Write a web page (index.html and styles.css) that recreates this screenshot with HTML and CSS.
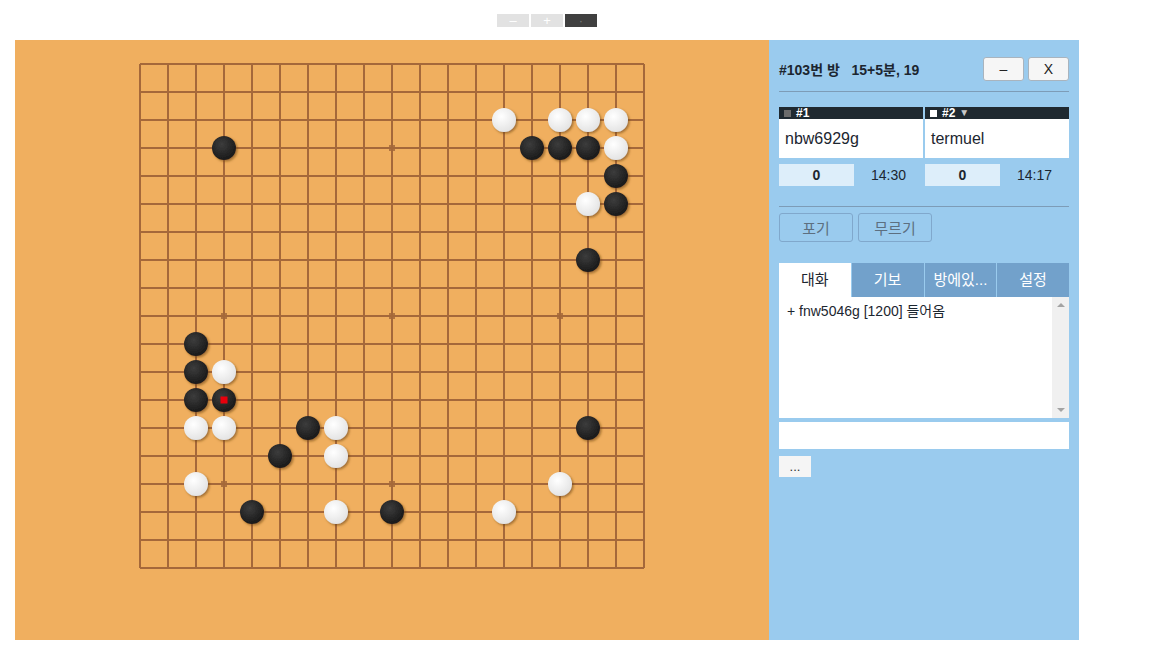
FILE: index.html
```html
<!DOCTYPE html>
<html lang="ko">
<head>
  <meta charset="UTF-8" />
  <title>오목 #103</title>
  <link rel="stylesheet" href="styles.css">
</head>
<body>
  <div class="wrap">
    <div class="zoom-bar">
      <button class="zoom-btn">–</button>
      <button class="zoom-btn">+</button>
      <button class="zoom-btn dark">·</button>
    </div>

    <div class="main">
      <div class="board">
        <svg id="board-svg" width="754" height="600" viewBox="0 0 754 600">
          <defs>
            <radialGradient id="g-black" cx="40%" cy="35%" r="65%">
              <stop offset="0" stop-color="#3c3c3c"/>
              <stop offset="1" stop-color="#1a1a1a"/>
            </radialGradient>
            <radialGradient id="g-white" cx="40%" cy="35%" r="65%">
              <stop offset="0" stop-color="#ffffff"/>
              <stop offset="1" stop-color="#e4e4e4"/>
            </radialGradient>
            <filter id="shadow" x="-30%" y="-30%" width="160%" height="160%">
              <feDropShadow dx="1.5" dy="1.5" stdDeviation="1" flood-color="#6b4010" flood-opacity="0.6"/>
            </filter>
          </defs>
          <g id="grid"></g>
          <g id="stones"></g>
        </svg>
      </div>

      <div class="panel">
        <div class="room-head">
          <div class="room-title">#103번 방 &nbsp;&nbsp;15+5분, 19</div>
          <div class="win-buttons">
            <button class="win-btn">–</button>
            <button class="win-btn">X</button>
          </div>
        </div>
        <hr class="sep">

        <div class="players">
          <div class="player">
            <div class="player-bar"><span class="mark gray"></span>#1</div>
            <div class="player-name">nbw6929g</div>
          </div>
          <div class="player">
            <div class="player-bar"><span class="mark white"></span>#2 <span class="tri">▼</span></div>
            <div class="player-name">termuel</div>
          </div>
        </div>

        <div class="scores">
          <div class="score-cell">
            <div class="score">0</div>
            <div class="clock">14:30</div>
          </div>
          <div class="score-cell">
            <div class="score">0</div>
            <div class="clock">14:17</div>
          </div>
        </div>
        <hr class="sep">

        <div class="actions">
          <button class="action-btn">포기</button>
          <button class="action-btn">무르기</button>
        </div>

        <div class="tabs">
          <div class="tab active">대화</div>
          <div class="tab">기보</div>
          <div class="tab">방에있...</div>
          <div class="tab">설정</div>
        </div>
        <div class="chat">
          <div class="chat-log">+ fnw5046g [1200] 들어옴</div>
          <div class="scrollbar">
            <span class="arrow up"></span>
            <span class="arrow down"></span>
          </div>
        </div>
        <input class="chat-input" type="text">
        <button class="more-btn">...</button>
      </div>
    </div>
  </div>

  <script>
    const NS = 'http://www.w3.org/2000/svg';
    const OX = 125, OY = 24, STEP = 28, N = 19;
    const grid = document.getElementById('grid');
    const stonesLayer = document.getElementById('stones');

    function el(name, attrs, parent) {
      const e = document.createElementNS(NS, name);
      for (const k in attrs) e.setAttribute(k, attrs[k]);
      parent.appendChild(e);
      return e;
    }

    // grid lines
    for (let i = 0; i < N; i++) {
      const p = OX + i * STEP;
      const q = OY + i * STEP;
      el('line', { x1: p, y1: OY, x2: p, y2: OY + 18 * STEP, class: 'ln' }, grid);
      el('line', { x1: OX, y1: q, x2: OX + 18 * STEP, y2: q, class: 'ln' }, grid);
    }

    // star points
    for (const r of [3, 9, 15]) {
      for (const c of [3, 9, 15]) {
        el('rect', { x: OX + c * STEP - 3, y: OY + r * STEP - 3, width: 6, height: 6, class: 'star' }, grid);
      }
    }

    // [col, row, color]
    const moves = [
      [13, 2, 'w'], [15, 2, 'w'], [16, 2, 'w'], [17, 2, 'w'],
      [3, 3, 'b'], [14, 3, 'b'], [15, 3, 'b'], [16, 3, 'b'], [17, 3, 'w'],
      [17, 4, 'b'],
      [16, 5, 'w'], [17, 5, 'b'],
      [16, 7, 'b'],
      [2, 10, 'b'],
      [2, 11, 'b'], [3, 11, 'w'],
      [2, 12, 'b'], [3, 12, 'b'],
      [2, 13, 'w'], [3, 13, 'w'], [6, 13, 'b'], [7, 13, 'w'], [16, 13, 'b'],
      [5, 14, 'b'], [7, 14, 'w'],
      [2, 15, 'w'], [15, 15, 'w'],
      [4, 16, 'b'], [7, 16, 'w'], [9, 16, 'b'], [13, 16, 'w'],
    ];
    const last = [3, 12];

    for (const [c, r, color] of moves) {
      el('circle', {
        cx: OX + c * STEP, cy: OY + r * STEP, r: 12,
        fill: color === 'b' ? 'url(#g-black)' : 'url(#g-white)',
        filter: 'url(#shadow)'
      }, stonesLayer);
    }
    el('rect', { x: OX + last[0] * STEP - 3.5, y: OY + last[1] * STEP - 3.5, width: 7, height: 7, class: 'last' }, stonesLayer);
  </script>
</body>
</html>
```

FILE: styles.css
```css
body {
  margin: 0;
  background: #fff;
  font-family: "Liberation Sans", Arial, "Noto Sans CJK KR", sans-serif;
  color: #1c2630;
}

.wrap {
  width: 1064px;
  margin-left: 15px;
}

.zoom-bar {
  height: 40px;
  display: flex;
  justify-content: center;
  align-items: flex-start;
  gap: 2px;
  padding-top: 14px;
  box-sizing: border-box;
}

.zoom-btn {
  width: 32px;
  height: 13px;
  padding: 0;
  border: none;
  background: #e2e2e2;
  color: #fff;
  font-size: 13px;
  line-height: 13px;
  font-family: inherit;
}

.zoom-btn.dark {
  background: #404040;
  color: #777;
}

.main {
  display: flex;
  height: 600px;
}

.board {
  width: 754px;
  height: 600px;
  background: #f0af5f;
}

.board svg {
  display: block;
}

.ln {
  stroke: #a5683a;
  stroke-width: 2;
}

.star {
  fill: #a5683a;
  opacity: 0.85;
}

.last {
  fill: #e8000c;
}

.panel {
  width: 310px;
  background: #9acbee;
  padding: 0 10px;
  box-sizing: border-box;
}

.room-head {
  display: flex;
  justify-content: space-between;
  align-items: center;
  height: 51px;
  padding-top: 6px;
  box-sizing: border-box;
}

.room-title {
  font-weight: bold;
  font-size: 14px;
}

.win-buttons {
  display: flex;
  gap: 4px;
}

.win-btn {
  width: 41px;
  height: 24px;
  padding: 0;
  border: 1px solid #a9b4be;
  border-radius: 3px;
  background: #f6f6f6;
  font-family: inherit;
  font-size: 14px;
  color: #222;
}

.sep {
  margin: 0;
  border: none;
  border-top: 1px solid #7d9cb7;
  height: 0;
}

.players {
  display: flex;
  gap: 2px;
  margin-top: 15px;
}

.player {
  flex: 1;
}

.player-bar {
  height: 12px;
  background: #1f2930;
  color: #fff;
  font-weight: bold;
  font-size: 12px;
  line-height: 12px;
  display: flex;
  align-items: center;
  padding-left: 5px;
}

.mark {
  width: 7px;
  height: 7px;
  margin-right: 5px;
}

.mark.gray {
  background: #6b6b6b;
}

.mark.white {
  background: #fff;
}

.tri {
  font-size: 10px;
  color: #c8c8c8;
  margin-left: 4px;
}

.player-name {
  height: 39px;
  background: #fff;
  font-size: 16px;
  line-height: 39px;
  padding-left: 6px;
}

.scores {
  display: flex;
  gap: 2px;
  margin-top: 6px;
  margin-bottom: 20px;
}

.score-cell {
  flex: 1;
  display: flex;
  height: 22px;
  align-items: center;
}

.score {
  width: 75px;
  height: 22px;
  background: #ddeefa;
  font-weight: bold;
  font-size: 14px;
  line-height: 22px;
  text-align: center;
}

.clock {
  flex: 1;
  text-align: center;
  font-size: 14px;
}

.actions {
  display: flex;
  gap: 5px;
  margin-top: 6px;
  margin-bottom: 21px;
}

.action-btn {
  width: 74px;
  height: 29px;
  border: 1px solid #80a8cc;
  border-radius: 3px;
  background: #9acbee;
  color: #5d6f80;
  font-family: inherit;
  font-size: 15px;
  padding: 0;
}

.tabs {
  display: flex;
  height: 34px;
  gap: 1px;
  background: #9acbee;
}

.tab {
  flex: 1;
  background: #72a1cb;
  color: #fff;
  font-size: 15px;
  line-height: 34px;
  text-align: center;
}

.tab.active {
  background: #fff;
  color: #1c2630;
}

.chat {
  display: flex;
  height: 121px;
  background: #fff;
}

.chat-log {
  flex: 1;
  font-size: 14px;
  padding: 3px 8px;
}

.scrollbar {
  width: 17px;
  background: #f0f0f0;
  display: flex;
  flex-direction: column;
  justify-content: space-between;
  align-items: center;
  padding: 6px 0;
  box-sizing: border-box;
}

.arrow {
  width: 0;
  height: 0;
  border-left: 4px solid transparent;
  border-right: 4px solid transparent;
}

.arrow.up {
  border-bottom: 4px solid #a3a3a3;
}

.arrow.down {
  border-top: 4px solid #a3a3a3;
}

.chat-input {
  display: block;
  width: 100%;
  height: 27px;
  margin-top: 4px;
  border: none;
  box-sizing: border-box;
  background: #fff;
}

.more-btn {
  display: block;
  margin-top: 7px;
  width: 32px;
  height: 21px;
  padding: 0;
  border: none;
  background: #f5f5f5;
  color: #333;
  font-family: inherit;
  font-size: 13px;
}
```
